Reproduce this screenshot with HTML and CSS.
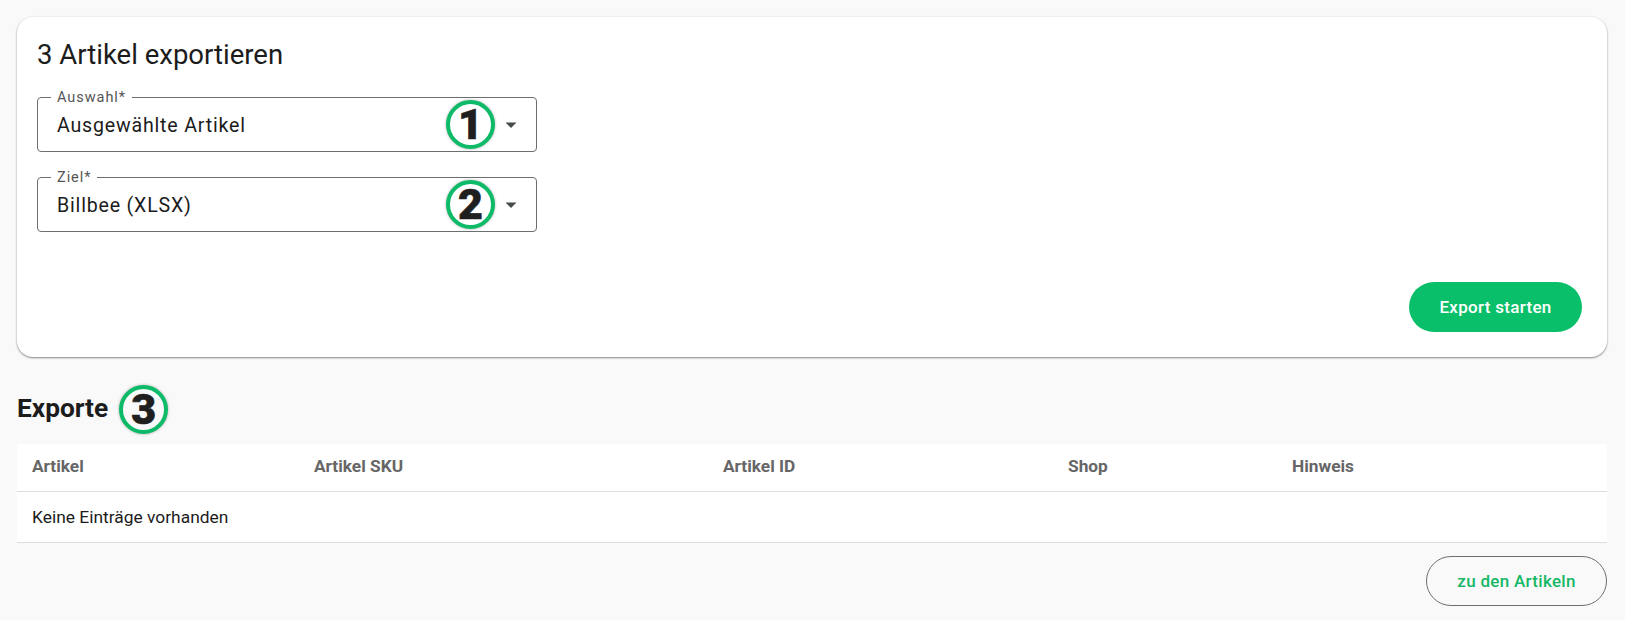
FILE: index.html
```html
<!DOCTYPE html>
<html lang="de">
<head>
    <meta charset="UTF-8">
    <title>Artikel exportieren</title>
    <link rel="stylesheet" href="styles.css">
</head>
<body>
    <section class="card">
        <h1 class="card-title">3 Artikel exportieren</h1>
        <div class="field">
            <span class="field-label">Auswahl*</span>
            <span class="field-value">Ausgewählte Artikel</span>
            <span class="badge badge-field">1</span>
            <svg class="caret" width="24" height="24" viewBox="0 0 24 24"><path d="M6.5 9.5l5.5 5.5 5.5-5.5z"/></svg>
        </div>
        <div class="field">
            <span class="field-label">Ziel*</span>
            <span class="field-value">Billbee (XLSX)</span>
            <span class="badge badge-field">2</span>
            <svg class="caret" width="24" height="24" viewBox="0 0 24 24"><path d="M6.5 9.5l5.5 5.5 5.5-5.5z"/></svg>
        </div>
        <div class="card-actions">
            <button class="btn btn-primary">Export starten</button>
        </div>
    </section>

    <div class="section-head">
        <h2 class="section-title">Exporte</h2>
        <span class="badge">3</span>
    </div>

    <div class="table">
        <div class="table-row table-header">
            <div>Artikel</div>
            <div>Artikel SKU</div>
            <div>Artikel ID</div>
            <div>Shop</div>
            <div>Hinweis</div>
        </div>
        <div class="table-empty">Keine Einträge vorhanden</div>
    </div>

    <div class="page-actions">
        <button class="btn btn-outline">zu den Artikeln</button>
    </div>
</body>
</html>
```

FILE: styles.css
```css
* {
    box-sizing: border-box;
}
body {
    margin: 0;
    height: 620px;
    padding: 17px 18px 0 17px;
    background: #f9f9f9;
    overflow: hidden;
    font-family: Roboto, "Liberation Sans", sans-serif;
    color: #1c1c1c;
}
.card {
    height: 340px;
    padding: 24px 20px 0 20px;
    background: #fff;
    border-radius: 16px;
    box-shadow: 0 1px 2px rgba(0, 0, 0, 0.45), 0 0 3px rgba(0, 0, 0, 0.05);
}
.card-title {
    margin: 0;
    height: 56px;
    font-size: 27.5px;
    line-height: 28px;
    font-weight: 400;
}
.field {
    position: relative;
    display: flex;
    align-items: center;
    justify-content: space-between;
    width: 500px;
    height: 55px;
    margin-bottom: 25px;
    padding: 1px 13px 0 19px;
    border: 1px solid #6b6f6d;
    border-radius: 4px;
}
.field-label {
    position: absolute;
    top: -9px;
    left: 13px;
    padding: 0 6px;
    background: #fff;
    font-size: 14.5px;
    line-height: 17px;
    letter-spacing: 0.95px;
    color: #555;
}
.field-value {
    font-size: 19.6px;
    letter-spacing: 0.8px;
}
.caret {
    fill: #454c49;
}
.badge {
    display: flex;
    align-items: center;
    justify-content: center;
    width: 49px;
    height: 49px;
    border: 4px solid #0dba68;
    border-radius: 50%;
    background: #f9f9f9;
    font-size: 43px;
    line-height: 1;
    font-weight: 900;
    -webkit-text-stroke: 0.6px #1f1f1f;
    color: #1f1f1f;
    box-shadow: 0 0 3px rgba(0, 0, 0, 0.3);
}
.badge-field {
    position: absolute;
    top: 2px;
    right: 41px;
    background: #fff;
}
.card-actions {
    display: flex;
    justify-content: flex-end;
    margin-top: 50px;
    padding-right: 5px;
}
.btn {
    height: 50px;
    border-radius: 25px;
    font-family: inherit;
    font-size: 17px;
    font-weight: 500;
    letter-spacing: 0.3px;
}
.btn-primary {
    width: 173px;
    border: 0;
    background: #0abf69;
    color: #fff;
}
.btn-outline {
    width: 181px;
    border: 1px solid #6b6f6d;
    background: transparent;
    color: #14b866;
}
.section-head {
    display: flex;
    align-items: center;
    gap: 11px;
    height: 49px;
    margin-top: 28px;
    margin-bottom: 10px;
}
.section-title {
    margin: 0 0 3px 0;
    font-size: 26.3px;
    font-weight: 700;
}
.table {
    background: #fff;
}
.table-row {
    display: grid;
    grid-template-columns: 282px 409px 345px 224px 1fr;
    align-items: center;
    height: 48px;
    padding: 0 0 4px 15px;
    border-bottom: 1px solid #dedede;
}
.table-header {
    font-size: 17.3px;
    font-weight: 700;
    color: #666;
}
.table-empty {
    display: flex;
    align-items: center;
    height: 51px;
    padding-left: 15px;
    border-bottom: 1px solid #dedede;
    font-size: 17.4px;
}
.page-actions {
    display: flex;
    justify-content: flex-end;
    margin-top: 13px;
}
```
